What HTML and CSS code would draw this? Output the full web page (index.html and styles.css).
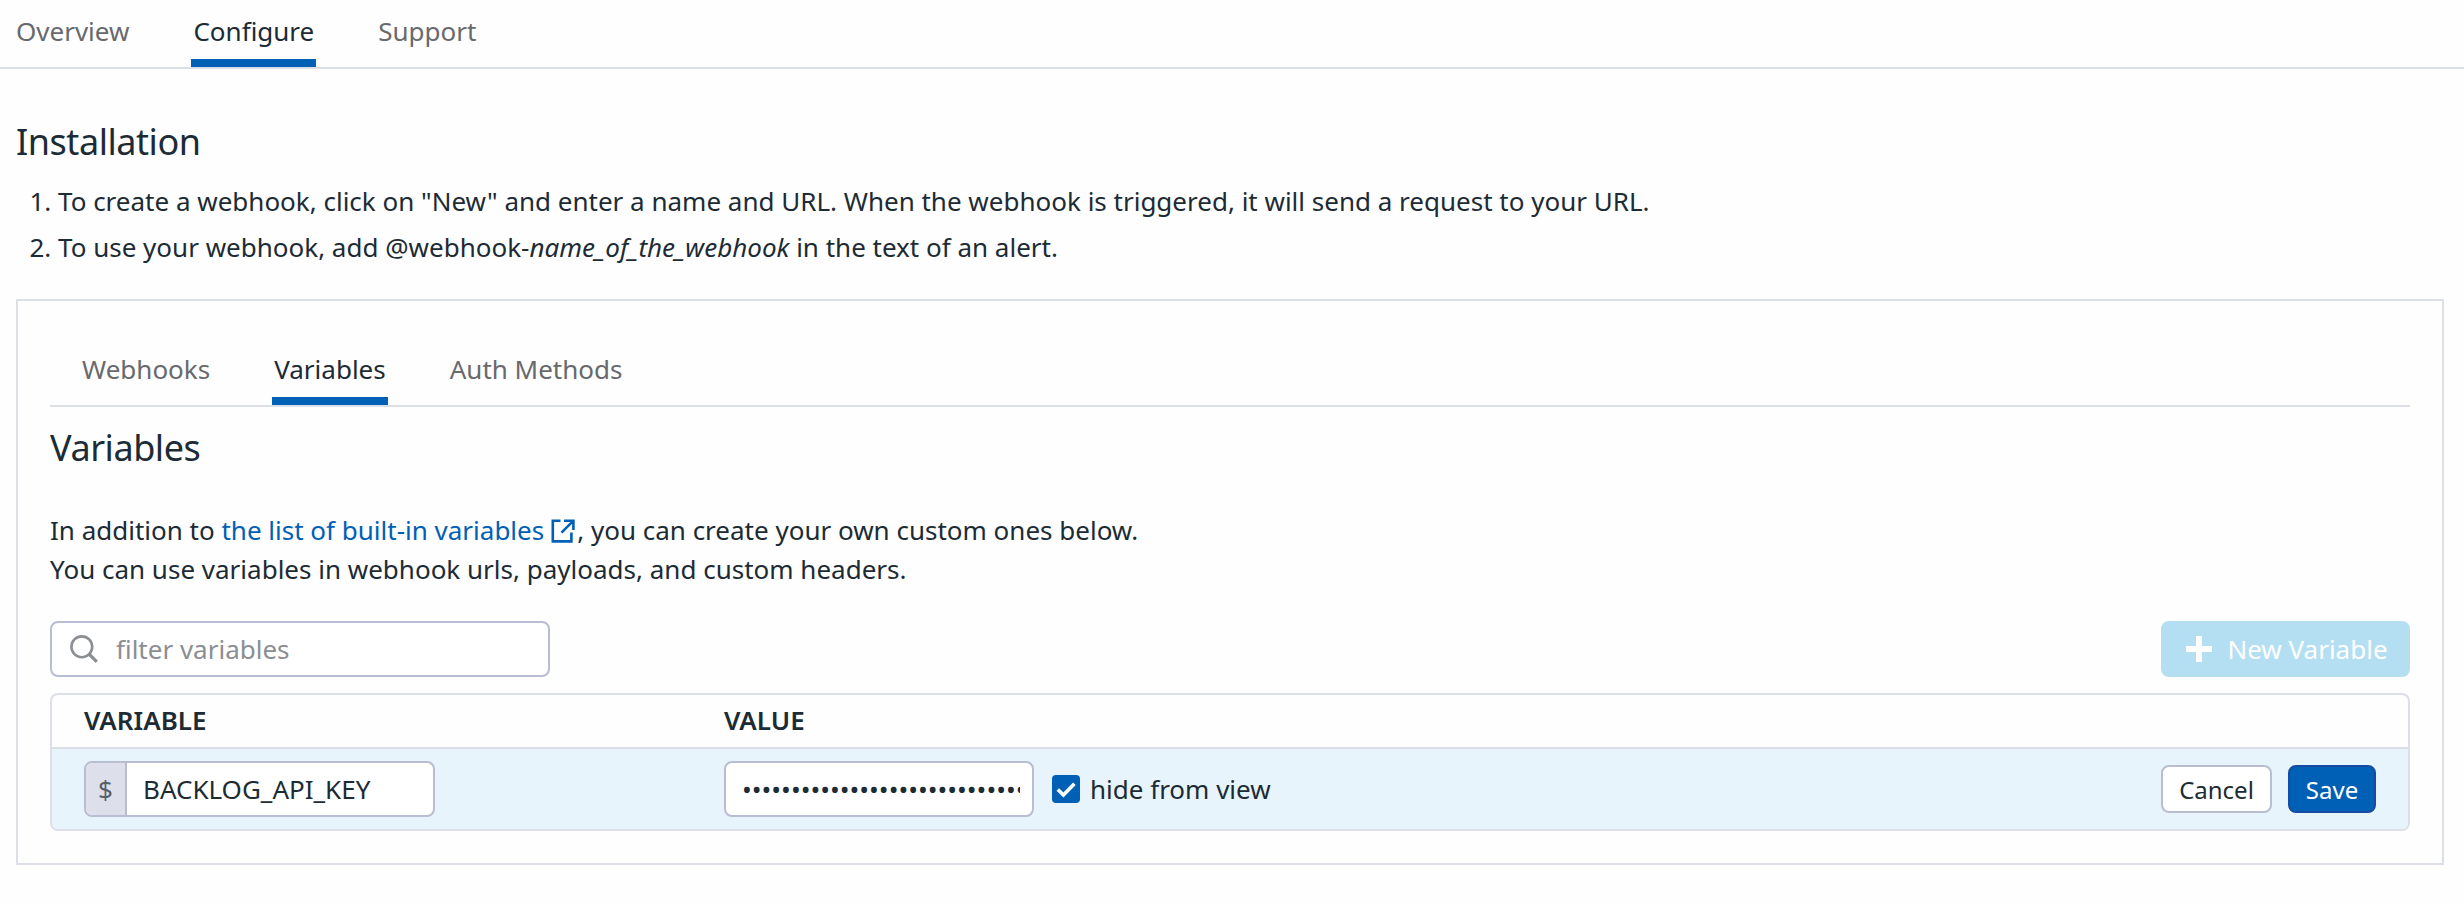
FILE: index.html
```html
<!DOCTYPE html>
<html lang="en">
<head>
  <meta charset="UTF-8">
  <title>Webhooks</title>
  <meta name="viewport" content="width=device-width, initial-scale=1.0">
  <link rel="stylesheet" href="styles.css">
</head>
<body>
  <nav class="tabs">
    <a class="tab">Overview</a>
    <a class="tab active">Configure</a>
    <a class="tab">Support</a>
  </nav>

  <main class="content">
    <h2 class="title">Installation</h2>
    <ol class="steps">
      <li>To create a webhook, click on "New" and enter a name and URL. When the webhook is triggered, it will send a request to your URL.</li>
      <li>To use your webhook, add @webhook-<em>name_of_the_webhook</em> in the text of an alert.</li>
    </ol>

    <section class="panel">
      <nav class="tabs inner">
        <a class="tab">Webhooks</a>
        <a class="tab active">Variables</a>
        <a class="tab">Auth Methods</a>
      </nav>

      <h2 class="title">Variables</h2>
      <p class="intro">
        In addition to <a class="link">the list of built-in variables<svg class="external" viewBox="0 0 24 24" fill="none" stroke="currentColor" stroke-width="2.6"><path d="M9.5 1.8H1.8V22.4H20.4V13.5M13 1.8H22.4V11M22 2.2L10.5 13.7"/></svg></a>, you can create your own custom ones below.<br>
        You can use variables in webhook urls, payloads, and custom headers.
      </p>

      <div class="toolbar">
        <label class="search">
          <svg class="search-icon" viewBox="0 0 28 28" fill="none" stroke="currentColor" stroke-width="2.6"><circle cx="11.8" cy="11.8" r="10.4"/><path d="M19 19L26.8 26.8" stroke-width="3.2"/></svg>
          <input type="text" placeholder="filter variables">
        </label>
        <button class="btn new" disabled>
          <svg class="plus" viewBox="0 0 28 28"><path d="M11 1h6v10h10v6H17v10h-6V17H1v-6h10z" fill="currentColor"/></svg>
          New Variable
        </button>
      </div>

      <div class="table">
        <div class="row head">
          <span>VARIABLE</span>
          <span>VALUE</span>
        </div>
        <div class="row edit">
          <div class="name-field">
            <span class="prefix">$</span>
            <input type="text" value="BACKLOG_API_KEY">
          </div>
          <div class="value-cell">
            <input class="value" type="password" value="0123456789012345678901234567890123456789">
            <span class="checkbox">
              <svg viewBox="0 0 28 28" fill="none" stroke="#fff" stroke-width="3.7"><path d="M5.8 14.5L11.4 20L22.4 8.7"/></svg>
            </span>
            <span>hide from view</span>
          </div>
          <div class="actions">
            <button class="btn cancel">Cancel</button>
            <button class="btn save">Save</button>
          </div>
        </div>
      </div>
    </section>
  </main>
</body>
</html>
```
FILE: styles.css
```css
* { margin: 0; padding: 0; box-sizing: border-box; }
body {
  background-color: #fefefe;
  font-family: 'Noto Sans', sans-serif;
  font-size: 26px;
  line-height: 39px;
  color: #1c2b34;
}
input, button {
  font: inherit;
  color: inherit;
}
input {
  border: none;
  outline: none;
  background: none;
  min-width: 0;
}

/* tabs */
.tabs {
  display: flex;
  gap: 60px;
  height: 69px;
  padding-left: 14px;
  border-bottom: 2px solid #dcdfe8;
}
.tab {
  padding: 12px 2px 0;
  color: #68696d;
}
.tab.active {
  color: #1c2b34;
  border-bottom: 8px solid #0060b5;
}
.tabs.inner { padding-left: 30px; }

.content { padding: 46px 20px 0 16px; }
.title {
  font-size: 36px;
  font-weight: 400;
  line-height: 54px;
  letter-spacing: -0.45px;
}

.steps {
  margin-top: 9px;
  padding-left: 42px;
  line-height: 46px;
}

/* bordered box */
.panel {
  margin-top: 29px;
  padding: 37px 32px 32px;
  border: 2px solid #dcdfe8;
}
.panel .title { margin-top: 14px; }
.intro { margin-top: 36px; }
.link { color: #0060b5; }
.external {
  width: 24px;
  height: 24px;
  margin: 0 2px 0 7px;
  vertical-align: -3px;
}

.toolbar {
  display: flex;
  justify-content: space-between;
  margin-top: 32px;
}
.search {
  display: flex;
  align-items: center;
  width: 500px;
  height: 56px;
  padding: 0 18px;
  background: #fff;
  border: 2px solid #b9bdd2;
  border-radius: 8px;
}
.search-icon {
  width: 28px;
  height: 28px;
  margin-right: 18px;
  color: #8b8e92;
}
.search input { flex: 1; }
.search input::placeholder { color: #8b8e92; opacity: 1; }

.btn {
  display: flex;
  align-items: center;
  justify-content: center;
  border: 2px solid transparent;
  border-radius: 8px;
}
.new {
  width: 249px;
  height: 56px;
  padding-left: 2px;
  border: none;
  background: #b4dff3;
  color: #fff;
}
.plus {
  width: 28px;
  height: 28px;
  margin-right: 14px;
}

/* variables table */
.table {
  margin-top: 16px;
  border: 2px solid #dcdfe8;
  border-radius: 8px;
  overflow: hidden;
}
.row {
  display: grid;
  grid-template-columns: 640px 1fr auto;
  align-items: center;
  padding: 0 32px;
}
.head {
  height: 54px;
  padding-bottom: 2px;
  border-bottom: 2px solid #dcdfe8;
  font-weight: 600;
}
.edit {
  height: 80px;
  background: #e7f4fb;
}
.name-field, .value {
  height: 56px;
  background: #fff;
  border: 2px solid #b9bdd2;
  border-radius: 8px;
}
.name-field {
  display: flex;
  width: 351px;
  overflow: hidden;
}
.name-field input {
  flex: 1;
  padding: 0 16px;
}
.prefix {
  width: 41px;
  line-height: 52px;
  text-align: center;
  color: #585f68;
  background: #dddfea;
  border-right: 2px solid #b9bdd2;
}
.value-cell {
  display: flex;
  align-items: center;
}
.value {
  width: 310px;
  padding: 0 12px 0 16px;
}
.checkbox {
  display: flex;
  width: 28px;
  height: 28px;
  margin: 0 10px 0 18px;
  background: #0060b5;
  border-radius: 4px;
}

.actions {
  display: flex;
  gap: 16px;
}
.actions .btn {
  height: 48px;
  font-size: 24px;
}
.cancel {
  width: 111px;
  background: #fff;
  border-color: #b9bdd2;
}
.save {
  width: 88px;
  background: #0060b5;
  border-color: #134ba5;
  color: #fff;
}
```
